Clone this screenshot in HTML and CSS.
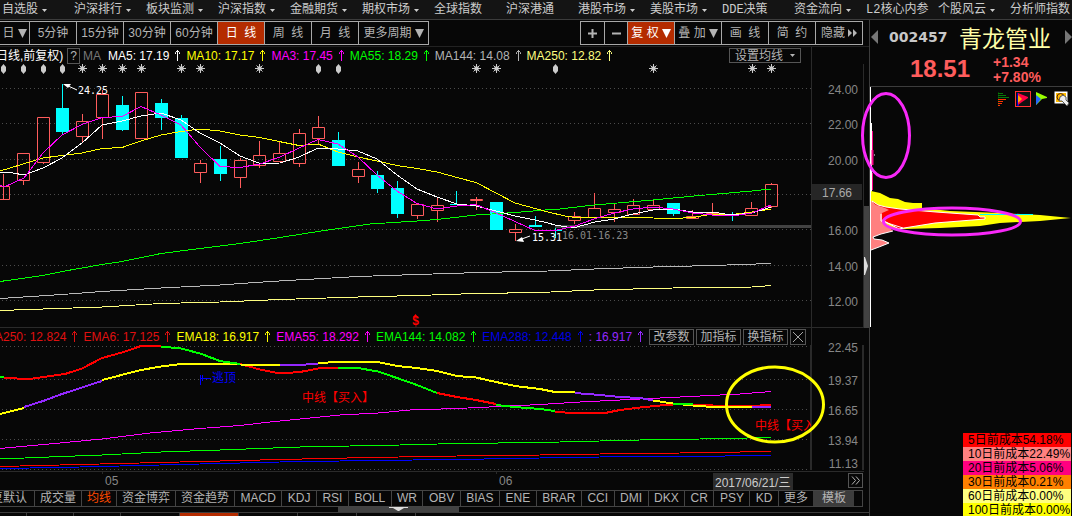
FILE: index.html
```html
<!DOCTYPE html>
<html lang="zh-CN">
<head>
<meta charset="utf-8">
<title>002457 青龙管业</title>
<link rel="stylesheet" href="styles.css">
</head>
<body>
<svg class="defs" aria-hidden="true">
  <symbol id="caret" viewBox="0 0 5 3"><path d="M0 0H5L2.5 3Z" fill="currentColor"/></symbol>
  <symbol id="drop" viewBox="0 0 9 9"><path d="M0 0H9L4.500 9Z" fill="currentColor"/></symbol>
  <symbol id="up" viewBox="0 0 8 13"><path d="M4.500 1V12M2.500 5V3.500L4.500 1.500L6.500 3.500V5" fill="none" stroke="currentColor"/></symbol>
</svg>
<nav class="menu">
  <a href="#">自选股<svg class="caret"><use href="#caret"/></svg></a>
  <a href="#">沪深排行<svg class="caret"><use href="#caret"/></svg></a>
  <a href="#">板块监测<svg class="caret"><use href="#caret"/></svg></a>
  <a href="#">沪深指数<svg class="caret"><use href="#caret"/></svg></a>
  <a href="#">金融期货<svg class="caret"><use href="#caret"/></svg></a>
  <a href="#">期权市场<svg class="caret"><use href="#caret"/></svg></a>
  <a href="#">全球指数</a>
  <a href="#">沪深港通</a>
  <a href="#">港股市场<svg class="caret"><use href="#caret"/></svg></a>
  <a href="#">美股市场<svg class="caret"><use href="#caret"/></svg></a>
  <a href="#">DDE决策</a>
  <a href="#">资金流向<svg class="caret"><use href="#caret"/></svg></a>
  <a href="#">L2核心内参</a>
  <a href="#">个股风云<svg class="caret"><use href="#caret"/></svg></a>
  <a href="#">分析师指数</a>
</nav>
<main class="layout">
  <section class="left">
    <div class="toolbar">
      <div class="group">
        <button class="short">日<svg class="drop"><use href="#drop"/></svg></button>
        <button>5分钟</button>
        <button>15分钟</button>
        <button>30分钟</button>
        <button>60分钟</button>
        <button class="on">日&nbsp; 线</button>
        <button>周&nbsp; 线</button>
        <button>月&nbsp; 线</button>
        <button class="wide">更多周期<svg class="drop"><use href="#drop"/></svg></button>
      </div>
      <div class="group">
        <button class="sign" aria-label="放大"><svg viewBox="0 0 9 9"><path d="M0 4.500H9M4.500 0V9" stroke="currentColor" stroke-width="2"/></svg></button>
        <button class="sign" aria-label="缩小"><svg viewBox="0 0 9 9"><path d="M0 4.500H9" stroke="currentColor" stroke-width="2"/></svg></button>
        <button class="on">复 权<svg class="drop"><use href="#drop"/></svg></button>
        <button>叠 加<svg class="drop"><use href="#drop"/></svg></button>
        <button>画&nbsp; 线</button>
        <button>简&nbsp; 约</button>
        <button>隐藏<svg class="fast" viewBox="0 0 9 8"><path d="M0 0L4 4L0 8ZM5 0L9 4L5 8Z" fill="currentColor"/></svg></button>
      </div>
    </div>
    <div class="charts">
      <div class="panels">
        <div class="price">
          <div class="legend">
            <span class="kind">日线,前复权)</span>
            <button class="help">?</button>
            <span class="grey ma">MA</span>
            <span class="item white">MA5: 17.19<svg class="up"><use href="#up"/></svg></span>
            <span class="item yellow">MA10: 17.17<svg class="up"><use href="#up"/></svg></span>
            <span class="item magenta">MA3: 17.45<svg class="up"><use href="#up"/></svg></span>
            <span class="item green">MA55: 18.29<svg class="up"><use href="#up"/></svg></span>
            <span class="item silver">MA144: 14.08<svg class="up"><use href="#up"/></svg></span>
            <span class="item cream">MA250: 12.82<svg class="up"><use href="#up"/></svg></span>
            <button class="averages">设置均线<svg class="caret"><use href="#caret"/></svg></button>
          </div>
          <svg class="plot" id="price" viewBox="0 64 864 264">
            <g class="grid"><path d="M2 88.500H811M2 123.500H811M2 159.500H811M2 194.500H811M2 229.500H811M2 265.500H811M2 300.500H811"/></g>
            <path class="frame" d="M811.500 64V327M863.500 64V327M0 327.500H864"/>
            <g id="markers" class="markers"></g>
            <rect x="555" y="225" width="256" height="3" fill="#424242"/>
            <g id="candles"></g>
            <g id="averages" class="lines"></g>
            <g stroke="#fff" fill="#fff"><path d="M66 85L77 90"/><path d="M63 84L71 84L68 88Z" stroke="none"/><path d="M530 236L519 240"/><path d="M516 241L522 237L524 242Z" stroke="none"/></g>
            <g class="mono"><text x="78" y="94" fill="#fff">24.25</text><text x="532" y="241" fill="#fff">15.31</text><text x="562" y="239" fill="#888">16.01-16.23</text></g>
            <text class="signal" x="412" y="325">$</text><path d="M413 317L415.500 314L418 317Z" fill="#f00"/>
            <rect x="812" y="184" width="50" height="16" fill="#262626"/>
            <g class="scale"><text x="858" y="94">24.00</text><text x="858" y="129">22.00</text><text x="858" y="165">20.00</text><text x="852" y="197" fill="#aaa">17.66</text><text x="858" y="235">16.00</text><text x="858" y="271">14.00</text><text x="858" y="306">12.00</text></g>
          </svg>
        </div>
        <div class="indicator">
          <div class="legend">
            <span class="item red first">EMA250: 12.824<svg class="up"><use href="#up"/></svg></span>
            <span class="item red">EMA6: 17.125<svg class="up"><use href="#up"/></svg></span>
            <span class="item yellow">EMA18: 16.917<svg class="up"><use href="#up"/></svg></span>
            <span class="item magenta">EMA55: 18.292<svg class="up"><use href="#up"/></svg></span>
            <span class="item green">EMA144: 14.082<svg class="up"><use href="#up"/></svg></span>
            <span class="item blue">EMA288: 12.448<svg class="up"><use href="#up"/></svg></span>
            <span class="item violet">: 16.917<svg class="up"><use href="#up"/></svg></span>
            <span class="actions"><button>改参数</button><button>加指标</button><button>换指标</button><button class="close" aria-label="关闭"><svg viewBox="0 0 11 11"><path d="M0 0L11 11M11 0L0 11" stroke="currentColor"/></svg></button></span>
          </div>
          <svg class="plot" id="indicator" viewBox="0 345 864 145">
            <clipPath id="area"><rect x="0" y="345" width="811" height="126"/></clipPath>
            <g class="grid"><path d="M2 346.500H811M2 379.500H811M2 409.500H811M2 439.500H811M2 469.500H811"/></g>
            <path class="frame" d="M0 471.500H864M102.500 471V474M496.500 471V474"/>
            <path class="frame" stroke-width="2" d="M811 345V470M863 345V470"/>
            <g id="emas" class="lines"></g>
            <path d="M200.500 375V385M202.500 375V381M200 378.500H211" stroke="#00f"/>
            <g clip-path="url(#area)" class="note"><text x="212" y="382" fill="#00f">逃顶</text><text x="302" y="402" fill="#f00">中线【买入】</text><text x="755" y="430" fill="#f00">中线【买入】</text></g>
            <ellipse cx="775" cy="404.500" rx="48.500" ry="37.500" fill="none" stroke="#ff0" stroke-width="3"/>
            <g class="scale"><text x="858" y="352">22.45</text><text x="858" y="385">19.37</text><text x="858" y="415">16.65</text><text x="858" y="445">13.94</text><text x="858" y="468">11.13</text></g>
            <g class="dates"><text x="105" y="485">05</text><text x="499" y="485">06</text></g>
            <rect x="713" y="473" width="80" height="17" fill="#2c2c2c"/>
            <g class="dates"><text x="715" y="487" fill="#ccc">2017/06/21/三</text></g>
          </svg>
          <button class="more" aria-label="更多"><svg viewBox="0 0 9 9"><path d="M1 0.500L4.500 4.500L1 8.500M5 0.500L8.500 4.500L5 8.500" fill="none" stroke="currentColor"/></svg></button>
        </div>
      </div>
      <svg class="strip" viewBox="864 47 5 443"><rect x="864" y="206" width="5" height="122" fill="#424242"/><path d="M864 257L865 257L868 266L865 275L864 275Z" fill="#ddd"/></svg>
    </div>
    <div class="tabs">
      <button class="cut"><span>恢复默认</span></button><button>成交量</button><button class="active">均线</button><button>资金博弈</button><button>资金趋势</button>
      <span class="codes"><button>MACD</button><button>KDJ</button><button>RSI</button><button>BOLL</button><button>WR</button><button>OBV</button><button>BIAS</button><button>ENE</button><button>BRAR</button><button>CCI</button><button>DMI</button><button>DKX</button><button>CR</button><button>PSY</button><button>KD</button></span>
      <button>更多</button><button class="template">模板</button><i class="end"></i>
    </div>
    <div class="handle"><span><svg viewBox="0 0 19 4"><path d="M0 0H19V1H15L10 4H9L4 1H0Z" fill="#ddd"/></svg></span></div>
    <div class="under"><i></i><i></i><i></i><i class="gap"></i><i class="lit"></i><i></i><i></i><i></i></div>
  </section>
  <aside class="right">
    <header class="quote">
      <div class="name">
        <button aria-label="上一只"><svg viewBox="0 0 7 14"><path d="M7 0V14L0 7Z" fill="#777"/></svg></button>
        <span class="code">002457</span><h1>青龙管业</h1>
        <button class="next" aria-label="下一只"><svg viewBox="0 0 7 14"><path d="M0 0V14L7 7Z" fill="#777"/></svg></button>
      </div>
      <div class="last"><strong>18.51</strong><div class="change"><span>+1.34</span><span>+7.80%</span></div></div>
    </header>
    <svg class="chips" viewBox="870 87 202 240">
      <path d="M870.500 87V327" stroke="#fff"/>
      <path d="M871.500 123V200" stroke="#fff"/><path d="M872.500 131V150M872.500 173V190" stroke="#f08"/><path d="M872.500 150V165" stroke="#f08" stroke-width="2"/><path d="M874 155H875" stroke="#fff"/>
      <path d="M871 191L880 193L890 198L898 199L905 202L913 203H922V208L950 211L1000 213L1040 215L1071 218L1040 221L1000 223L980 226L940 228L905 229H871Z" fill="#ff0"/>
      <path d="M980 214.500H1033" stroke="#0ff"/>
      <path d="M872 201L878 205L886 207L900 209L936 212L978 215L980 217H985V219L960 221L935 223L904 228L899 229L886 222L880 219Z" fill="red" stroke="#fff"/>
      <path d="M871 201L876 205L885 208L889 210L882 213V222L885 223L893 231L881 234L873 237L874 239L882 240L889 243L879 247L871 250Z" fill="#ff8080"/>
      <path d="M881 214V221L903 228M893 231L881 234L873 237L874 239L882 240L889 243L879 247L871 250" fill="none" stroke="#fff"/>
      <g class="hand"><ellipse cx="886" cy="135.500" rx="23.500" ry="42"/><ellipse cx="952" cy="221.500" rx="68.500" ry="13.500"/></g>
      <g fill="none"><path d="M998.500 92V106" stroke="#033803"/><path d="M998 93.500H1003M998 95.500H1006M998 97.500H1009" stroke="#087808"/><path d="M998 99.500H1006M998 101.500H1003M998 103.500H1002M998 105.500H1000" stroke="#f30"/></g>
      <rect x="1015.500" y="91.500" width="15" height="15" fill="#111" stroke="#f33"/><path d="M1017 93H1019V106H1017Z" fill="#00c"/><path d="M1018 93L1023 95L1028 97V98L1022 102L1018 105Z" fill="#f04"/><path d="M1018 95L1021 98L1022 99L1018 103Z" fill="#fa0"/>
      <path d="M1036 92L1047 97L1047 98L1042 99L1036 105Z" fill="#9f0"/><path d="M1036 95L1041 99L1036 105Z" fill="#26f"/>
      <rect x="1054.500" y="91.500" width="13" height="12" fill="#fff"/><rect x="1056" y="93" width="10" height="9" fill="#fb0"/><circle cx="1060.500" cy="97" r="3.500" fill="none" stroke="#520"/><path d="M1060 97L1063 95L1066 97V100L1069 103L1067 106L1062 101L1059 101Z" fill="#eee" stroke="#555"/>
    </svg>
    <ul class="costs">
      <li class="c5">5日前成本54.18%</li><li class="c10">10日前成本22.49%</li><li class="c20">20日前成本5.06%</li><li class="c30">30日前成本0.21%</li><li class="c60">60日前成本0.00%</li><li class="c100">100日前成本0.00%</li>
    </ul>
  </aside>
</main>
<script src="chart.js"></script>
</body>
</html>
```
FILE: styles.css
```css
* { box-sizing: border-box; }
body { margin: 0; height: 100vh; display: flex; flex-direction: column; overflow: hidden; background: #070707; color: #b4b4b4; font: 12px/16px "Liberation Sans", "Noto Sans CJK SC", sans-serif; }
button { margin: 0; padding: 0; border: 0; background: none; color: inherit; font: inherit; white-space: nowrap; cursor: pointer; }
svg { display: block; overflow: visible; }
.defs { position: absolute; width: 0; height: 0; }
.caret { width: 5px; height: 3px; flex: none; }
.drop { width: 9px; height: 9px; flex: none; }
.up { width: 8px; height: 13px; flex: none; }

.menu { display: grid; grid-template-columns: repeat(15, minmax(72px, 1fr)); flex: none; height: 20px; padding-left: 2px; background: #141414; border-bottom: 1px solid #3c3c3c; overflow: hidden; }
.menu a { display: flex; align-items: center; gap: 4px; padding-top: 1px; color: #ccc; text-decoration: none; white-space: nowrap; font-family: "Liberation Mono", "Noto Sans CJK SC", monospace; }

.layout { flex: 1; min-height: 0; display: grid; grid-template-columns: minmax(0, 1fr) 202px; }
.left { display: flex; flex-direction: column; min-width: 0; border-right: 1px solid #3c3c3c; overflow: hidden; }
.toolbar { display: flex; justify-content: space-between; flex: none; height: 27px; padding: 1px 6px 1px 0; border-bottom: 1px solid #222; }
.group { display: flex; height: 24px; border: 1px solid #a8a8a8; border-left: 0; }
.group button { display: flex; align-items: center; justify-content: center; gap: 3px; width: 47px; border-left: 1px solid #a8a8a8; }
.group button:first-child { border-left: 0; }
.group + .group { border-left: 1px solid #a8a8a8; }
.group .short { width: 29px; }
.group .wide { width: 70px; }
.group .sign { width: 23px; }
.sign svg { width: 9px; height: 9px; }
.fast { width: 9px; height: 8px; }
.group .on { background: #b42c00; color: #fff; }

.charts { flex: none; display: grid; grid-template-columns: minmax(0, 1fr) 5px; }
.strip { width: 5px; height: 100%; }
.plot { width: 100%; height: auto; }
.legend { display: flex; align-items: center; height: 17px; margin-right: 52px; padding-right: 5px; border-right: 1px solid #2a2a2a; white-space: nowrap; }
.indicator { position: relative; }
.item { display: flex; align-items: center; gap: 4px; margin-right: 5px; }
.item.first { margin-left: -23px; }
.kind { color: #fff; margin-left: -4px; width: 71px; }
.help { width: 13px; height: 16px; border: 1px solid #555; line-height: 14px; }
.ma { margin: 0 7px 0 3px; }
.averages { display: flex; align-items: center; justify-content: center; gap: 7px; margin-left: auto; margin-right: 5px; width: 72px; height: 15px; border: 1px solid #555; }
.actions { display: flex; gap: 2px; margin-left: auto; }
.actions button { width: 45px; height: 16px; border: 1px solid #555; line-height: 14px; }
.actions .close { width: 16px; display: grid; place-items: center; }
.close svg { width: 10px; height: 10px; }
.white { color: #fff; } .yellow { color: #ff0; } .magenta { color: #f0f; } .green { color: #0f0; } .silver { color: #b4b4b4; } .cream { color: #ffff80; } .red { color: #e01010; } .blue { color: #0000e6; } .violet { color: #9428ff; } .grey { color: #777; }

.grid path { stroke: #4c4c4c; stroke-dasharray: 1 3; fill: none; shape-rendering: crispEdges; }
.frame { stroke: #2a2a2a; fill: none; }
.lines { fill: none; stroke-width: 1; shape-rendering: crispEdges; }
.markers { fill: #ccc; stroke: #ccc; }
.mono { font: 10px "DejaVu Sans Mono", monospace; }
.signal { font: bold 12px "Liberation Mono", monospace; fill: #f00; }
.scale { text-anchor: end; fill: #868686; }
.dates { fill: #868686; }
.more { position: absolute; right: 1px; bottom: 2px; width: 15px; height: 15px; display: grid; place-items: center; border: 1px solid #555; }
.more svg { width: 9px; height: 9px; }

.tabs { display: flex; flex: none; height: 17px; margin-right: 6px; border: 1px solid #444; border-left: 0; line-height: 15px; }
.tabs button { padding: 0 5px 0 5px; border-left: 1px solid #444; }
.tabs .cut { width: 34px; border-left: 0; padding-left: 0; display: flex; justify-content: flex-end; overflow: hidden; padding-right: 7px; flex: none; }
.codes { display: flex; flex: 1; }
.codes button { flex: 1 0 auto; padding: 0 5px; }
.tabs .active { color: #ff4a00; }
.tabs .template { background: #3c3c3c; width: 41px; border-left-color: #3c3c3c; }
.end { width: 8px; }
.handle { display: flex; justify-content: center; flex: none; height: 5px; margin-right: 72px; }
.handle span { width: 121px; background: #424242; }
.handle svg { width: 19px; height: 4px; margin: 0 auto; }
.under { display: flex; flex: 1; border-top: 1px solid #3c3c3c; }
.under i { width: 59px; border-right: 1px solid #3c3c3c; }
.under i:nth-child(-n+3) { width: 47px; }
.under i:first-child { width: 27px; }
.under .lit { background: #b42c00; }

.right { display: flex; flex-direction: column; min-width: 0; }
.quote { flex: none; height: 67px; border-bottom: 1px solid #3c3c3c; }
.name { display: flex; align-items: center; height: 33px; padding-left: 1px; }
.name button svg { width: 7px; height: 14px; }
.name .next { margin-left: auto; }
.code { margin-left: 11px; width: 70px; font: bold 14px/20px "DejaVu Sans", sans-serif; color: #c8c8c8; }
h1 { margin: 0; font: 23px/30px "Noto Sans CJK SC", sans-serif; color: #ffffa8; white-space: nowrap; }
.last { display: flex; color: #ff5c5c; font-weight: bold; }
.last strong { width: 83px; margin-left: 40px; font-size: 24px; line-height: 32px; }
.change { display: flex; flex-direction: column; padding-top: 2px; font-size: 14px; line-height: 15px; }
.chips { width: 100%; height: auto; flex: none; }
.hand ellipse { fill: none; stroke: #f828f8; stroke-width: 3; }
.costs { align-self: flex-end; width: 109px; margin: auto 0 -1px; padding: 0 1px 0 0; list-style: none; color: #000; }
.costs li { height: 14px; padding-left: 5px; line-height: 14px; white-space: nowrap; }
.c5 { background: #f00; } .c10 { background: #ff8080; } .c20 { background: #ff0080; } .c30 { background: #ff8000; } .c60 { background: #ffff80; } .c100 { background: #ff0; }
```
FILE: chart.js
```js
const NS = "http://www.w3.org/2000/svg";

function add(parent, tag, attrs) {
  const node = document.createElementNS(NS, tag);
  for (const key in attrs) node.setAttribute(key, attrs[key]);
  document.getElementById(parent).appendChild(node);
}

// [x, body top, body bottom, wick top, wick bottom, rising]
const candles = [
  [3, 186, 199, 174, 186, 1], [23, 153, 180, 153, 185, 1], [43, 117, 162, 117, 164, 1],
  [62, 108, 132, 84, 134, 0], [82, 121, 136, 114, 142, 1], [102, 94, 117, 90, 139, 1],
  [122, 105, 130, 96, 131, 0], [141, 92, 138, 92, 139, 1], [161, 103, 118, 99, 130, 0],
  [181, 118, 158, 115, 158, 0], [200, 163, 172, 160, 183, 1], [220, 159, 174, 146, 181, 0],
  [240, 160, 177, 158, 188, 1], [259, 155, 165, 141, 168, 1], [279, 153, 161, 141, 162, 1],
  [299, 133, 163, 129, 167, 1], [318, 127, 138, 116, 144, 1], [338, 140, 166, 132, 166, 0],
  [358, 169, 176, 162, 183, 1], [377, 175, 189, 171, 193, 0], [397, 188, 214, 181, 218, 0],
  [417, 204, 215, 204, 219, 1], [437, 205, 210, 197, 222, 1], [456, 204, 205, 191, 205, 0],
  [476, 199, 200, 197, 210, 1], [496, 202, 230, 202, 230, 0], [515, 229, 232, 224, 241, 1],
  [535, 225, 227, 216, 227, 0], [555, 230, 231, 228, 238, 0], [574, 216, 220, 212, 224, 1],
  [594, 208, 217, 193, 219, 1], [614, 209, 212, 203, 222, 1], [633, 205, 214, 199, 215, 1],
  [653, 205, 209, 200, 210, 1], [673, 203, 214, 203, 216, 0], [692, 216, 218, 210, 219, 1],
  [712, 213, 214, 203, 214, 1], [732, 214, 215, 212, 221, 0], [751, 208, 215, 202, 216, 1],
  [771, 184, 206, 183, 208, 1]
];
for (const [x, top, bottom, high, low, rising] of candles) {
  const c = x + 0.5;
  if (rising) {
    add("candles", "path", {
      d: `M${c} ${high}V${top}M${c} ${bottom}V${low}M${c - 6} ${top + 0.5}H${c + 6}V${bottom + 0.5}H${c - 6}Z`,
      stroke: "#ff5c5c", fill: "none"
    });
  } else {
    add("candles", "path", { d: `M${c} ${high}V${low}`, stroke: "#0ff" });
    add("candles", "rect", { x: x - 6, y: top, width: 13, height: bottom - top, fill: "#0ff" });
  }
}

const averages = {
  "#ffff80": "0,310.5 102,307 161,303.5 220,302 280,299.5 358,297 417,295.500 476,293.5 540,292.5 594,290 673,288 752,287 771,285.5",
  "#b8b8b8": "0,298.5 62,294.5 102,291.5 161,288 220,285 270,281.500 358,276.5 417,274.5 480,272.5 548,271 594,269 653,267 712,265.5 771,263.5",
  "#00ff00": "0,281.5 43,275.5 62,271.5 102,264.5 122,261.5 161,253.5 200,248.5 240,243.5 280,237.5 318,231.5 370,224 417,221 437,219.5 476,215 515,212.5 545,210 560,209 594,205 653,200 694,196 752,191 771,189",
  "#ffff00": "0,171 43,158 62,155.5 82,153 102,148.5 122,147.5 141,141 161,135 181,131.5 200,129 220,131 240,135 260,137.5 279,141.5 299,145.5 318,144 338,152 358,157 377,161 397,165.5 417,168.5 437,172 457,177.5 476,182.5 496,193 515,203 535,208.5 548,212 565,216 575,217.5 594,217.5 653,218 673,218.5 693,217.5 712,214 732,214.5 752,212 771,209",
  "#ffffff": "0,172 13,173 24,175 43,168 62,158 82,143 102,125 122,121 141,116 161,113 181,120 200,133 220,143 240,156 260,163.5 280,163 299,157 318,148 338,149 358,151 377,159 397,175 417,189 437,197 457,204 476,206 496,211 515,216 535,220 548,223 555,225 573,228 595,222 614,219 633,214 653,210 673,209 693,212 712,212 732,215 752,213 771,207",
  "#ff00ff": "0,185 4,187 24,178 43,153 62,135 82,124.5 102,117.5 122,116.5 141,106.5 161,115 181,125 200,147 220,166.5 240,167.5 260,164 280,157 299,148 318,139.5 338,144 358,157 377,175 397,191 417,203.5 437,209 457,206 476,204.5 496,213 515,221.5 535,230.5 555,230.5 575,226 594,219 614,213 633,209 653,207 673,209 693,213 712,215 732,216 752,213 771,205"
};
for (const stroke in averages) add("averages", "polyline", { points: averages[stroke], stroke });

for (const x of [3, 23, 43, 62, 318, 338, 555]) {
  add("markers", "path", { d: `M${x + 0.5} 64L${x + 3} 67V71L${x + 0.5} 74L${x - 2} 71V67Z`, "stroke-width": 0 });
}
for (const x of [82, 102, 122, 141, 181, 200, 259, 476, 496, 653, 752, 771]) {
  add("markers", "path", { d: `M${x + 0.5} 64V73M${x - 4} 68.500H${x + 5}M${x - 2.5} 65.500L${x + 3.5} 71.500M${x + 3.5} 65.500L${x - 2.5} 71.500M${x - 1} 67H${x + 2}V70H${x - 1}Z` });
}

const red = "#ff0000", green = "#00ff00", yellow = "#ffff00", violet = "#9428ff";
const emas = [
  [1, "#0000ff", "0,468.5 60,467.5 120,466 200,464 280,462 370,460.5 457,459.5 540,458 600,457 680,456.5 771,455.5"],
  [1, red, "0,466.5 60,465 120,463.500 200,461.5 280,459.5 370,457.5 457,456 540,455 600,454 680,453 771,451.5"],
  [1, green, "0,459 62,456.5 102,455 161,452 220,450 300,447 400,445 457,443.5 540,442.5 580,441.5 640,440 700,439 771,437.5"],
  [1, "#ff00ff", "0,448.5 60,443 102,439 150,433 200,428.5 240,425.5 270,422 300,419 340,415 378,413 410,410 457,408.5 500,406.5 540,404.5 580,402 640,399 700,396 740,394 771,391.5"],
  [2, green, "0,377 4,377"],
  [2, red, "4,378 30,379 43,377 65,374 82,368.5 102,358 122,352.5 141,346 161,346"],
  [2, red, "240,364 260,369.5 280,373.5 300,372 318,368.5 338,368"],
  [2, green, "338,368 358,368 378,371.5 397,378 417,385 437,393"],
  [2, red, "437,393 457,397 476,400 496,404"],
  [2, yellow, "0,414 24,408"],
  [2, violet, "24,407 43,401 62,394 102,381"],
  [2, yellow, "102,380 141,370 161,366.5 181,364 220,364 240,364.5 280,365"],
  [2, green, "161,346.5 181,348.5 200,353.5 220,361 240,364"],
  [2, violet, "280,365 300,365 318,363.5"],
  [2, yellow, "318,363 338,362 378,362 397,366 417,368 437,371 457,376 476,377.5 496,382 515,386 540,389 555,392 575,392.5"],
  [2, violet, "575,393 600,395 620,397 640,398 653,400.5"],
  [2, green, "496,405 515,407 540,409 555,411"],
  [2, red, "555,412 575,413 605,413 620,410 640,407.5 665,405 673,404.5"],
  [2, red, "693,405 712,405 713,406 760,406 761,405 771,405"],
  [2, yellow, "653,400.5 673,403.5 693,405.5 712,407 752,407"],
  [2, green, "673,404 693,404"],
  [2, violet, "752,407 771,407"]
];
for (const [width, stroke, points] of emas) {
  add("emas", "polyline", { points, stroke, "stroke-width": width });
}
```
